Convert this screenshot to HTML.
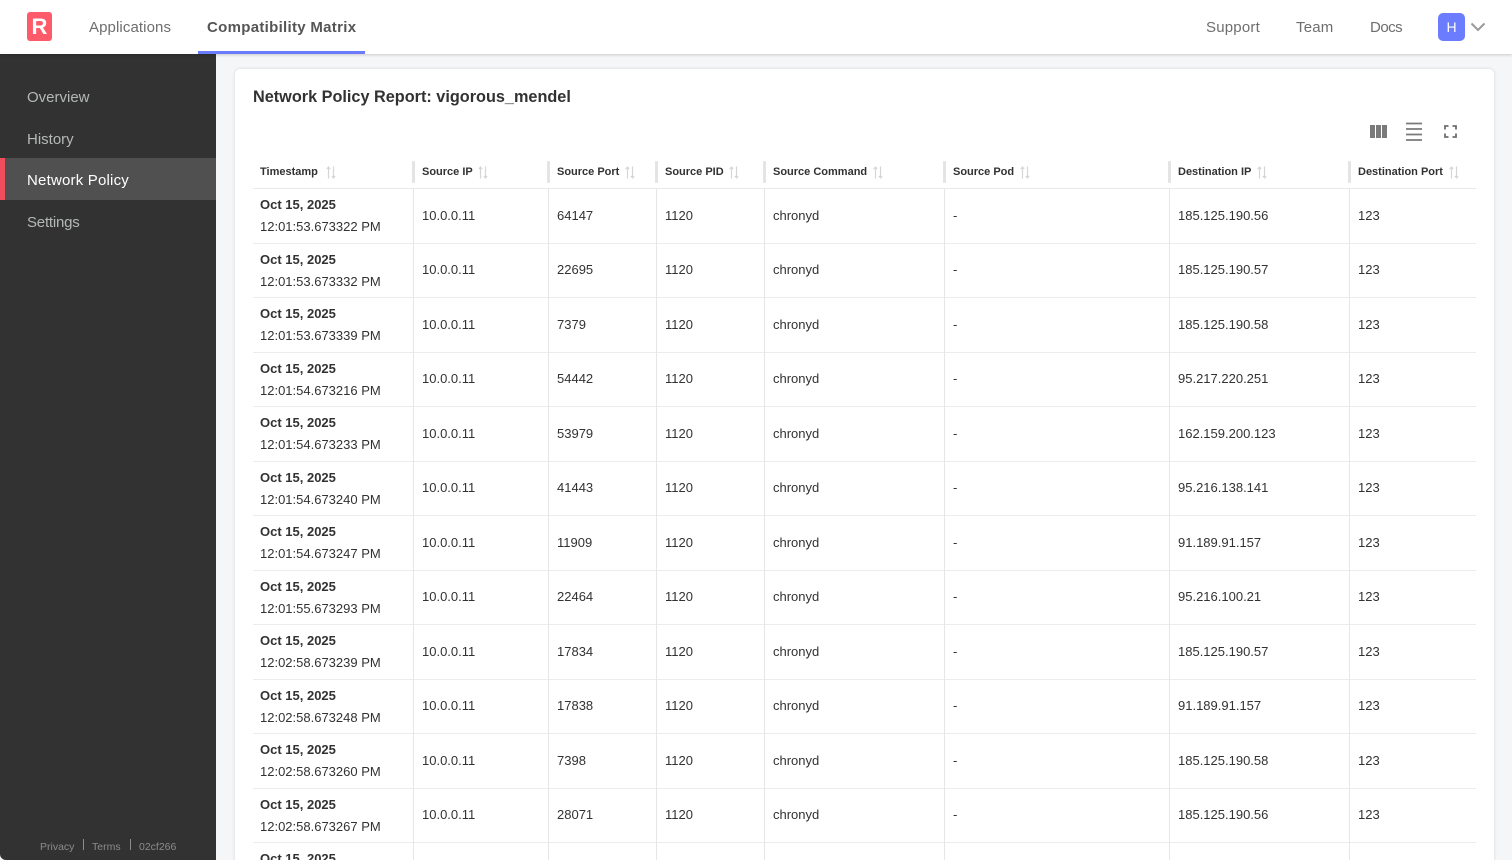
<!DOCTYPE html>
<html lang="en"><head><meta charset="utf-8"><title>Network Policy Report</title>
<style>
*{box-sizing:border-box;margin:0;padding:0}
html,body{width:1512px;height:860px;overflow:hidden;background:#f5f6f8;font-family:"Liberation Sans",sans-serif;color:#323232}
#wrap{position:relative;width:1512px;height:860px;overflow:hidden;contain:paint}
.abs{position:absolute;white-space:nowrap}
#top{position:absolute;left:0;top:0;width:1512px;height:54px;background:#fff;box-shadow:0 1px 3px rgba(0,0,0,.18);z-index:3}
.nav{position:absolute;top:18px;font-size:15px;line-height:20px;color:#6e6e6e;letter-spacing:.1px;white-space:nowrap}
#logo{position:absolute;left:27px;top:12px;width:25px;height:29px;background:#fd5b6a;border-radius:3px;color:#fff;font-weight:bold;font-size:22px;line-height:29px;text-align:center}
#ul{position:absolute;left:198px;top:51px;width:167px;height:3px;background:#6b7cff}
#av{position:absolute;left:1438px;top:13px;width:27px;height:28px;background:#6b7cff;border-radius:5px;color:#fff;font-size:14px;line-height:28px;text-align:center}
#side{position:absolute;left:0;top:54px;width:216px;height:806px;background:#323232;border-bottom-left-radius:6px;z-index:2}
.si{position:absolute;left:27px;font-size:15px;line-height:20px;color:#b4b8b6;white-space:nowrap}
#act{position:absolute;left:0;top:104px;width:216px;height:42px;background:#505050;border-left:5px solid #f04e5c}
.ft{position:absolute;top:786px;font-size:10.5px;line-height:14px;color:#8c8c8c;white-space:nowrap}
.fs{position:absolute;top:785px;width:1px;height:11px;background:#8c8c8c}
#card{position:absolute;left:235px;top:69px;width:1259px;height:820px;background:#fff;border-radius:5px;box-shadow:0 0 3px rgba(0,0,0,.14)}
h1{position:absolute;left:253px;top:87px;font-size:16.25px;line-height:21px;font-weight:bold;color:#323232;white-space:nowrap}
.g{position:absolute;left:253px;width:1223px;display:grid;grid-template-columns:161px 135px 108px 108px 180px 225px 180px 126px}
#head{top:155px;height:34px;border-bottom:1px solid #e8e8e8}
#head>div{position:relative;padding-left:7px;font-size:11px;font-weight:bold;line-height:34px;color:#323232;white-space:nowrap}
#head>div:not(:first-child){padding-left:8px}
#head>div:not(:last-child)::after{content:"";position:absolute;right:-1px;top:6px;width:3px;height:22px;background:#e4e4e4;border-radius:1px}
#head svg{position:absolute;top:11px}
.r{height:55.5px;border-bottom:1px solid #ececec;font-size:13px;color:#323232}
.r>div{display:flex;align-items:center;padding:0 0 0 8px;border-right:1.5px solid #e6e6e6;white-space:nowrap}
.r>div:first-child{display:block;padding:6px 0 0 7px;line-height:22px}
.r>div:last-child{border-right:0}
b{color:#323232;display:block}
</style></head><body>
<div id="wrap">
<svg width="0" height="0" style="position:absolute"><defs><symbol id="s" viewBox="0 0 11 13"><path d="M2.500 12.500V1M.8 3 2.500 1 4.200 3M7.500.5V12M5.800 10 7.500 12 9.200 10" fill="none" stroke="#d6d6d6" stroke-width="1.200"/></symbol></defs></svg>
<div id="top">
<div id="logo">R</div>
<div class="nav" style="left:89px">Applications</div>
<div class="nav" style="left:207px;font-weight:bold;color:#555;letter-spacing:.3px">Compatibility Matrix</div>
<div id="ul"></div>
<div class="nav" style="left:1206px;letter-spacing:.2px">Support</div>
<div class="nav" style="left:1296px;letter-spacing:.2px">Team</div>
<div class="nav" style="left:1370px;letter-spacing:-.5px">Docs</div>
<div id="av">H</div>
<svg class="abs" style="left:1470px;top:22px" width="16" height="10" viewBox="0 0 16 10"><path d="M1.500 1.500 8 8l6.500-6.500" fill="none" stroke="#999" stroke-width="2"/></svg>
</div>
<div id="side">
<div id="act"></div>
<div class="si" style="top:34px">Overview</div>
<div class="si" style="top:76px">History</div>
<div class="si" style="top:117px;color:#fff;letter-spacing:.2px">Network Policy</div>
<div class="si" style="top:159px;letter-spacing:-.2px">Settings</div>
<div class="ft" style="left:40px">Privacy</div><div class="fs" style="left:83px"></div>
<div class="ft" style="left:92px">Terms</div><div class="fs" style="left:130px"></div>
<div class="ft" style="left:139px">02cf266</div>
</div>
<div id="card"></div>
<h1>Network Policy Report: vigorous_mendel</h1>
<svg class="abs" style="left:1370px;top:125px" width="17" height="13" viewBox="0 0 17 13"><path d="M0 0h5v13H0zM6 0h5v13H6zM12 0h5v13h-5z" fill="#7a7a7a"/></svg>
<svg class="abs" style="left:1405px;top:122px" width="18" height="19" viewBox="0 0 18 19"><path d="M1 1.500h16M1 7h16M1 12.500h16M1 18h16" fill="none" stroke="#7a7a7a" stroke-width="1.700"/></svg>
<svg class="abs" style="left:1444px;top:125px" width="13" height="13" viewBox="0 0 13 13"><path d="M1 4.500V1h3.500M8.500 1H12v3.500M12 8.500V12H8.500M4.500 12H1V8.500" fill="none" stroke="#6e6e6e" stroke-width="1.800"/></svg>
<div class="g" id="head">
<div>Timestamp<svg style="left:73px" width="11" height="13"><use href="#s"/></svg></div>
<div>Source IP<svg style="left:64px" width="11" height="13"><use href="#s"/></svg></div>
<div>Source Port<svg style="left:76px" width="11" height="13"><use href="#s"/></svg></div>
<div>Source PID<svg style="left:72px" width="11" height="13"><use href="#s"/></svg></div>
<div>Source Command<svg style="left:108px" width="11" height="13"><use href="#s"/></svg></div>
<div>Source Pod<svg style="left:75px" width="11" height="13"><use href="#s"/></svg></div>
<div>Destination IP<svg style="left:87px" width="11" height="13"><use href="#s"/></svg></div>
<div>Destination Port<svg style="left:99px" width="11" height="13"><use href="#s"/></svg></div>
</div>
<div class="g r" style="top:188px"><div><b>Oct 15, 2025</b>12:01:53.673322 PM</div><div>10.0.0.11</div><div>64147</div><div>1120</div><div>chronyd</div><div>-</div><div>185.125.190.56</div><div>123</div></div>
<div class="g r" style="top:242.5px"><div><b>Oct 15, 2025</b>12:01:53.673332 PM</div><div>10.0.0.11</div><div>22695</div><div>1120</div><div>chronyd</div><div>-</div><div>185.125.190.57</div><div>123</div></div>
<div class="g r" style="top:297px"><div><b>Oct 15, 2025</b>12:01:53.673339 PM</div><div>10.0.0.11</div><div>7379</div><div>1120</div><div>chronyd</div><div>-</div><div>185.125.190.58</div><div>123</div></div>
<div class="g r" style="top:351.5px"><div><b>Oct 15, 2025</b>12:01:54.673216 PM</div><div>10.0.0.11</div><div>54442</div><div>1120</div><div>chronyd</div><div>-</div><div>95.217.220.251</div><div>123</div></div>
<div class="g r" style="top:406px"><div><b>Oct 15, 2025</b>12:01:54.673233 PM</div><div>10.0.0.11</div><div>53979</div><div>1120</div><div>chronyd</div><div>-</div><div>162.159.200.123</div><div>123</div></div>
<div class="g r" style="top:460.5px"><div><b>Oct 15, 2025</b>12:01:54.673240 PM</div><div>10.0.0.11</div><div>41443</div><div>1120</div><div>chronyd</div><div>-</div><div>95.216.138.141</div><div>123</div></div>
<div class="g r" style="top:515px"><div><b>Oct 15, 2025</b>12:01:54.673247 PM</div><div>10.0.0.11</div><div>11909</div><div>1120</div><div>chronyd</div><div>-</div><div>91.189.91.157</div><div>123</div></div>
<div class="g r" style="top:569.5px"><div><b>Oct 15, 2025</b>12:01:55.673293 PM</div><div>10.0.0.11</div><div>22464</div><div>1120</div><div>chronyd</div><div>-</div><div>95.216.100.21</div><div>123</div></div>
<div class="g r" style="top:624px"><div><b>Oct 15, 2025</b>12:02:58.673239 PM</div><div>10.0.0.11</div><div>17834</div><div>1120</div><div>chronyd</div><div>-</div><div>185.125.190.57</div><div>123</div></div>
<div class="g r" style="top:678.5px"><div><b>Oct 15, 2025</b>12:02:58.673248 PM</div><div>10.0.0.11</div><div>17838</div><div>1120</div><div>chronyd</div><div>-</div><div>91.189.91.157</div><div>123</div></div>
<div class="g r" style="top:733px"><div><b>Oct 15, 2025</b>12:02:58.673260 PM</div><div>10.0.0.11</div><div>7398</div><div>1120</div><div>chronyd</div><div>-</div><div>185.125.190.58</div><div>123</div></div>
<div class="g r" style="top:787.5px"><div><b>Oct 15, 2025</b>12:02:58.673267 PM</div><div>10.0.0.11</div><div>28071</div><div>1120</div><div>chronyd</div><div>-</div><div>185.125.190.56</div><div>123</div></div>
<div class="g r" style="top:842px"><div><b>Oct 15, 2025</b></div><div></div><div></div><div></div><div></div><div></div><div></div><div></div></div>
</div>
</body></html>
